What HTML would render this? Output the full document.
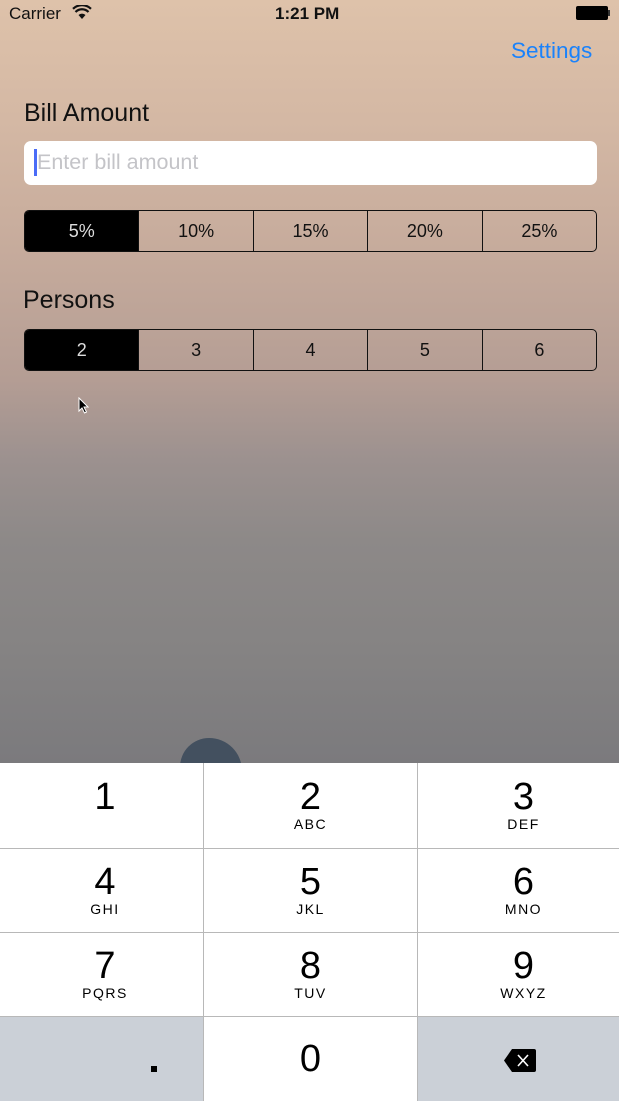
<!DOCTYPE html>
<html><head><meta charset="utf-8"><style>
*{margin:0;padding:0;box-sizing:border-box}
body{width:619px;height:1101px;position:relative;overflow:hidden;font-family:"Liberation Sans",sans-serif;
background:linear-gradient(180deg,#dec2aa 0px,#d4b8a4 120px,#c6ab9c 250px,#b49d94 380px,#9c918f 460px,#8d8988 540px,#858383 650px,#7b7a7d 763px)}
.abs{position:absolute}
.seg{position:absolute;left:24px;width:573px;height:42px;border:1.5px solid #111;border-radius:5px;display:flex;overflow:hidden}
.seg div{flex:1;border-left:1.5px solid #111;display:flex;align-items:center;justify-content:center;font-size:18px;color:#111}
.seg div:first-child{border-left:none;background:#000;color:#ddd}
.kb{position:absolute;top:763px;left:0;width:619px;height:338px;background:#fff}
.k{position:absolute;text-align:center;color:#000}
.k b{display:block;font-weight:normal;font-size:38px;line-height:40px;margin-top:14px}
.k i{display:block;font-style:normal;font-size:14px;letter-spacing:1.5px;margin-top:-1px}
.hl{position:absolute;left:0;width:619px;height:1px;background:#b8b8b8}
.vl{position:absolute;width:1px;background:#b8b8b8;top:0;height:338px}
</style></head><body>
<div class="abs" style="left:9px;top:4px;font-size:17px;color:#111">Carrier</div>
<svg class="abs" style="left:72px;top:5px" width="20" height="15" viewBox="0 0 20 15"><path d="M10 14 L6.5 10 A5 5 0 0 1 13.5 10Z" fill="#111"/><path d="M3.5 7 A9 9 0 0 1 16.5 7" stroke="#111" stroke-width="2.2" fill="none"/><path d="M1 3.8 A13 13 0 0 1 19 3.8" stroke="#111" stroke-width="2.2" fill="none"/></svg>
<div class="abs" style="left:275px;top:4px;font-size:17px;font-weight:bold;color:#111">1:21 PM</div>
<div class="abs" style="left:576px;top:6px;width:32px;height:14px;background:#000;border-radius:2px"></div>
<div class="abs" style="left:608px;top:10px;width:2px;height:6px;background:#333"></div>
<div class="abs" style="left:511px;top:38px;font-size:22.5px;color:#1a82fb">Settings</div>
<div class="abs" style="left:24px;top:99px;font-size:25px;color:#111">Bill Amount</div>
<div class="abs" style="left:24px;top:141px;width:573px;height:44px;background:#fff;border-radius:7px"></div>
<div class="abs" style="left:34px;top:149px;width:3px;height:27px;background:#4a6cf7"></div>
<div class="abs" style="left:37px;top:150px;font-size:21.5px;color:#c4c4c8">Enter bill amount</div>
<div class="seg" style="top:210px"><div>5%</div><div>10%</div><div>15%</div><div>20%</div><div>25%</div></div>
<div class="abs" style="left:23px;top:286px;font-size:25px;color:#111">Persons</div>
<div class="seg" style="top:329px"><div>2</div><div>3</div><div>4</div><div>5</div><div>6</div></div>
<svg class="abs" style="left:78px;top:397px" width="12" height="18" viewBox="0 0 12 18"><path d="M1 1 L1 14 L4 11 L6.5 16 L8.5 15 L6 10 L10 10Z" fill="#000" stroke="#fff" stroke-width="1"/></svg>
<div class="abs" style="left:180px;top:738px;width:62px;height:40px;border-radius:30px 34px 0 0;background:#43505f"></div>
<div class="kb">
<div class="abs" style="left:0;top:253px;width:204px;height:85px;background:#cbd0d7"></div>
<div class="abs" style="left:417px;top:253px;width:202px;height:85px;background:#cbd0d7"></div>
<div class="hl" style="top:85px"></div><div class="hl" style="top:169px"></div><div class="hl" style="top:253px"></div>
<div class="vl" style="left:203px"></div><div class="vl" style="left:417px"></div>
<div class="k" style="left:3px;top:0;width:204px"><b>1</b></div>
<div class="k" style="left:204px;top:0;width:213px"><b>2</b><i>ABC</i></div>
<div class="k" style="left:423px;top:0;width:201px"><b>3</b><i>DEF</i></div>
<div class="k" style="left:3px;top:85px;width:204px"><b>4</b><i>GHI</i></div>
<div class="k" style="left:204px;top:85px;width:213px"><b>5</b><i>JKL</i></div>
<div class="k" style="left:423px;top:85px;width:201px"><b>6</b><i>MNO</i></div>
<div class="k" style="left:3px;top:169px;width:204px"><b>7</b><i>PQRS</i></div>
<div class="k" style="left:204px;top:169px;width:213px"><b>8</b><i>TUV</i></div>
<div class="k" style="left:423px;top:169px;width:201px"><b>9</b><i>WXYZ</i></div>
<div class="k" style="left:204px;top:262px;width:213px"><b>0</b></div>
<div class="abs" style="left:151px;top:303px;width:6px;height:6px;background:#000"></div>
<svg class="abs" style="left:503px;top:285px" width="34" height="25" viewBox="0 0 34 25"><path d="M9 1 H31 Q33 1 33 3 V22 Q33 24 31 24 H9 L1 12.5Z" fill="#000"/><path d="M15 7 L25 18 M25 7 L15 18" stroke="#fff" stroke-width="1.6"/></svg>
</div>
</body></html>
